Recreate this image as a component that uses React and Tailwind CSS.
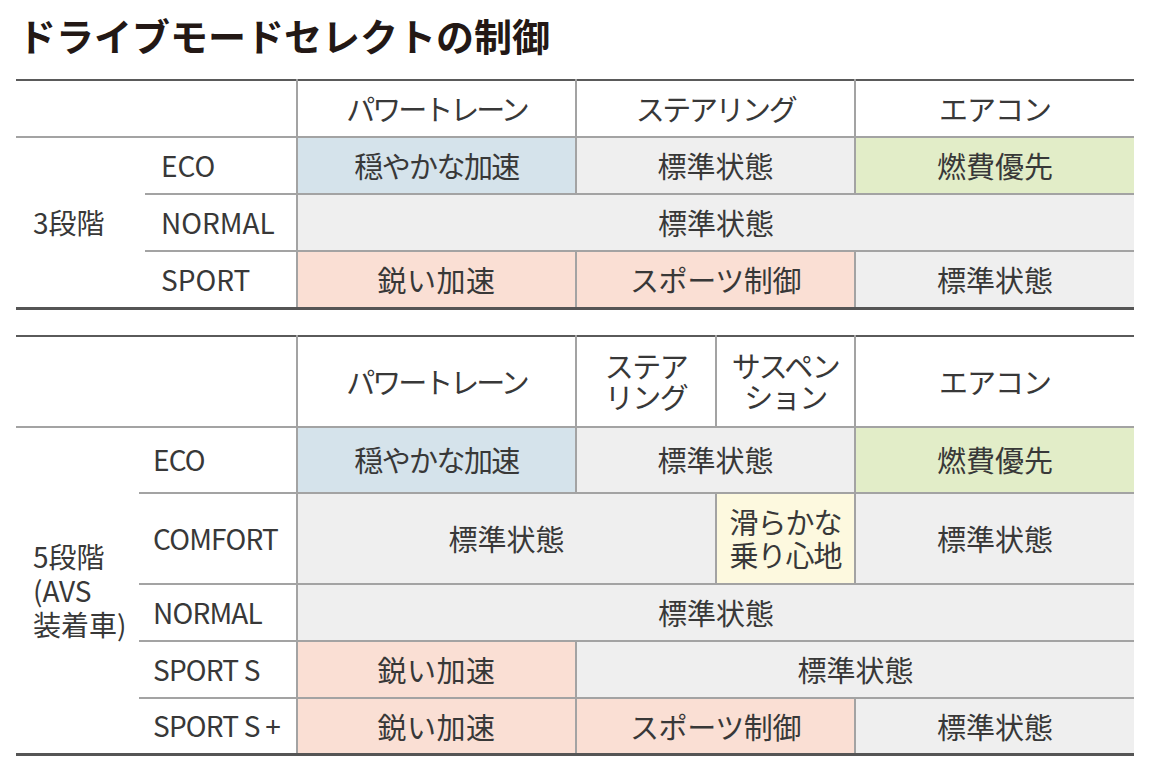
import React from 'react';

const FONT = { fontFamily: '"Noto Sans CJK JP", "Noto Sans", sans-serif' };

const line = 'border-[#a3a3a3]';
const cell = `border-2 ${line} text-center align-middle text-[29px]`;

// tracking tuned per label so the widths follow the printed table
const T = {
  power: 'tracking-[-3px]',
  steer: 'tracking-[-2.4px]',
  calm: 'tracking-[-1.6px]',
  sport: 'tracking-[-0.4px]',
  air: 'tracking-[-1px]',
  std: 'tracking-[0px]',
  sharp: 'tracking-[0.6px]',
};

function ThreeStepTable() {
  return (
    <table className="w-[1118px] table-fixed border-collapse border-t-2 border-b-[3px] border-t-[#5a5a5a] border-b-[#555]">
      <colgroup>
        <col className="w-[129px]" />
        <col className="w-[152px]" />
        <col className="w-[279px]" />
        <col className="w-[279px]" />
        <col className="w-[279px]" />
      </colgroup>
      <tbody>
        <tr className="h-[57px]">
          <td colSpan={2} className={`border-b-2 ${line}`}></td>
          <td className={`${cell} border-t-0 ${T.power}`}>パワートレーン</td>
          <td className={`${cell} border-t-0 ${T.steer}`}>ステアリング</td>
          <td className={`${cell} border-t-0 border-r-0 ${T.air}`}>エアコン</td>
        </tr>
        <tr className="h-[57px]">
          <td rowSpan={3} className="pl-[17px] align-middle text-left">3段階</td>
          <td className={`pl-4 text-left align-middle border-b-2 ${line}`}>ECO</td>
          <td className={`${cell} bg-[#d5e3eb] ${T.calm}`}>穏やかな加速</td>
          <td className={`${cell} bg-[#efefef] ${T.std}`}>標準状態</td>
          <td className={`${cell} border-r-0 bg-[#e2edc8]`}>燃費優先</td>
        </tr>
        <tr className="h-[57px]">
          <td className={`pl-4 text-left align-middle border-b-2 ${line}`}>NORMAL</td>
          <td colSpan={3} className={`${cell} border-r-0 bg-[#efefef]`}>標準状態</td>
        </tr>
        <tr className="h-[57px]">
          <td className="pl-4 text-left align-middle">SPORT</td>
          <td className={`${cell} border-b-0 bg-[#fadfd4] ${T.sharp}`}>鋭い加速</td>
          <td className={`${cell} border-b-0 bg-[#fadfd4] ${T.sport}`}>スポーツ制御</td>
          <td className={`${cell} border-b-0 border-r-0 bg-[#efefef]`}>標準状態</td>
        </tr>
      </tbody>
    </table>
  );
}

function FiveStepTable() {
  const mode = `pl-[14px] text-left align-middle whitespace-nowrap tracking-[-0.8px]`;
  return (
    <table className="w-[1118px] table-fixed border-collapse border-t-2 border-b-[3px] border-t-[#5a5a5a] border-b-[#555]">
      <colgroup>
        <col className="w-[123px]" />
        <col className="w-[158px]" />
        <col className="w-[279px]" />
        <col className="w-[140px]" />
        <col className="w-[139px]" />
        <col className="w-[279px]" />
      </colgroup>
      <tbody>
        <tr className="h-[91px]">
          <td colSpan={2} className={`border-b-2 ${line}`}></td>
          <td className={`${cell} border-t-0 ${T.power}`}>パワートレーン</td>
          <td className={`${cell} border-t-0 leading-[31px] tracking-[-1.5px]`}>ステア<br />リング</td>
          <td className={`${cell} border-t-0 leading-[31px] tracking-[-1.5px]`}>サスペン<br />ション</td>
          <td className={`${cell} border-t-0 border-r-0 ${T.air}`}>エアコン</td>
        </tr>
        <tr className="h-[66px]">
          <td rowSpan={5} className="pl-[17px] align-middle text-left leading-[34px]">
            5段階<br />(AVS<br />装着車)
          </td>
          <td className={`${mode} border-b-2 ${line}`}>ECO</td>
          <td className={`${cell} bg-[#d5e3eb] ${T.calm}`}>穏やかな加速</td>
          <td colSpan={2} className={`${cell} bg-[#efefef]`}>標準状態</td>
          <td className={`${cell} border-r-0 bg-[#e2edc8]`}>燃費優先</td>
        </tr>
        <tr className="h-[91px]">
          <td className={`${mode} border-b-2 ${line}`}>COMFORT</td>
          <td colSpan={2} className={`${cell} bg-[#efefef]`}>標準状態</td>
          <td className={`${cell} bg-[#fdf9df] leading-[33px] tracking-[-1px]`}>滑らかな<br />乗り心地</td>
          <td className={`${cell} border-r-0 bg-[#efefef]`}>標準状態</td>
        </tr>
        <tr className="h-[57px]">
          <td className={`${mode} border-b-2 ${line}`}>NORMAL</td>
          <td colSpan={4} className={`${cell} border-r-0 bg-[#efefef]`}>標準状態</td>
        </tr>
        <tr className="h-[57px]">
          <td className={`${mode} border-b-2 ${line}`}>SPORT S</td>
          <td className={`${cell} bg-[#fadfd4] ${T.sharp}`}>鋭い加速</td>
          <td colSpan={3} className={`${cell} border-r-0 bg-[#efefef]`}>標準状態</td>
        </tr>
        <tr className="h-[57px]">
          <td className={mode}>SPORT S +</td>
          <td className={`${cell} border-b-0 bg-[#fadfd4] ${T.sharp}`}>鋭い加速</td>
          <td colSpan={2} className={`${cell} border-b-0 bg-[#fadfd4] ${T.sport}`}>スポーツ制御</td>
          <td className={`${cell} border-b-0 border-r-0 bg-[#efefef]`}>標準状態</td>
        </tr>
      </tbody>
    </table>
  );
}

export default function App() {
  return (
    <div style={FONT} className="w-[1152px] h-[768px] bg-white overflow-hidden pl-4 pt-4">
      <h1 className="pl-[2px] text-[38px] leading-none font-bold text-[#231815]">
        ドライブモードセレクトの制御
      </h1>
      <div className="mt-[25px] text-[28px] text-[#383838] leading-tight">
        <ThreeStepTable />
        <div className="h-[25px]" />
        <FiveStepTable />
      </div>
    </div>
  );
}
